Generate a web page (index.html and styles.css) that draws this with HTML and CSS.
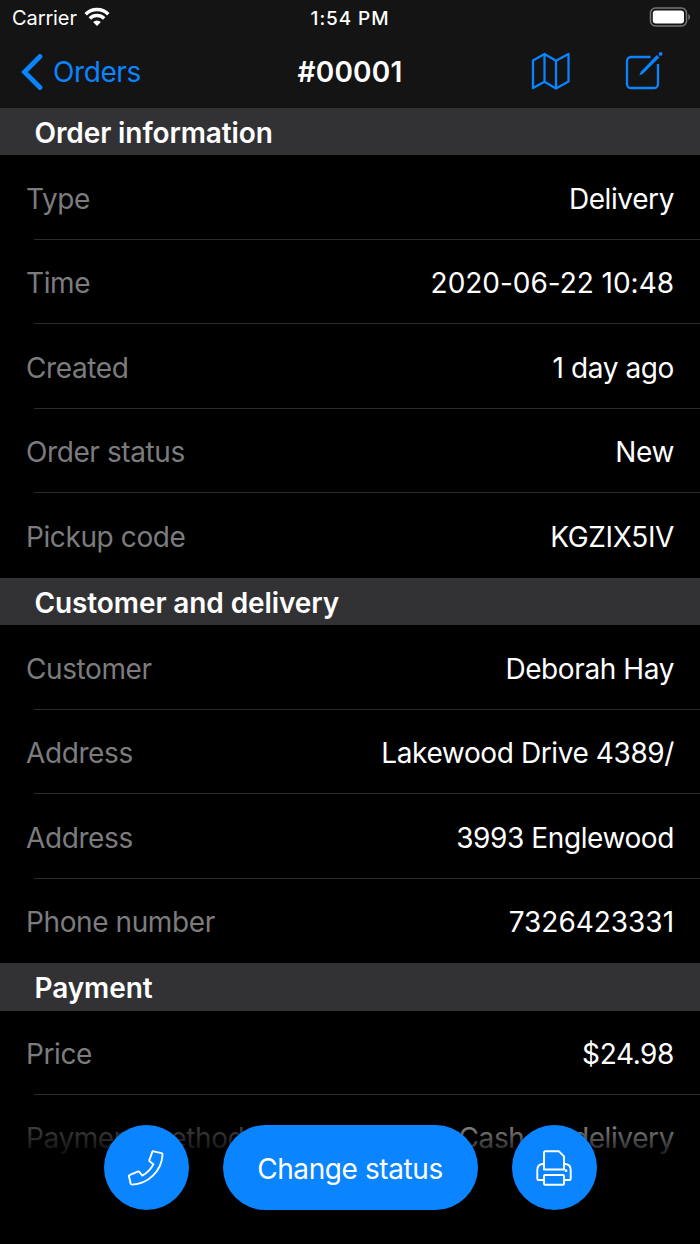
FILE: index.html
```html
<!DOCTYPE html>
<html lang="en">
<head>
    <meta charset="UTF-8">
    <title>Order #00001</title>
    <link rel="stylesheet" href="styles.css">
</head>
<body>
    <div class="screen">
        <header>
            <div class="status-bar">
                <div class="carrier">
                    <span>Carrier</span>
                    <svg class="wifi" width="26" height="19" viewBox="0 0 26 19">
                        <path d="M1.700 7.200a16 16 0 0 1 22.600 0M5.800 11.500a10.200 10.200 0 0 1 14.400 0" fill="none" stroke="#fff" stroke-width="3.500"/>
                        <path d="M13 19l-3.900-3.900a5.500 5.500 0 0 1 7.800 0z" fill="#fff"/>
                    </svg>
                </div>
                <div class="clock">1:54 PM</div>
                <div class="battery">
                    <svg width="42" height="20" viewBox="0 0 42 20">
                        <rect x="1.500" y="1" width="36" height="18" rx="5" fill="none" stroke="#767676" stroke-width="1.500"/>
                        <rect x="3.800" y="3.600" width="31.200" height="12.900" rx="3" fill="#fff"/>
                        <path d="M39.300 7v6c2.200-1 2.200-5 0-6z" fill="#767676"/>
                    </svg>
                </div>
            </div>
            <nav class="nav-bar">
                <a class="back" href="#">
                    <svg width="22" height="36" viewBox="0 0 22 36">
                        <path d="M19 2.500L3.500 18l15.500 15.500" fill="none" stroke="#0a84ff" stroke-width="4.800" stroke-linecap="round" stroke-linejoin="miter"/>
                    </svg>
                    <span>Orders</span>
                </a>
                <h1>#00001</h1>
                <div class="actions">
                    <svg width="40" height="38" viewBox="0 0 40 38">
                        <path d="M2 8.500L13.500 2 25 8.700 37.500 2V29.500L25 36.500 13.500 29.800 2 36zM13.500 2v27.800M25 8.700v27.800" fill="none" stroke="#0a84ff" stroke-width="2.300" stroke-linejoin="round"/>
                    </svg>
                    <svg width="38" height="38" viewBox="0 0 38 38">
                        <path d="M25.500 5H6a4 4 0 0 0-4 4V32a4 4 0 0 0 4 4H29a4 4 0 0 0 4-4V12" fill="none" stroke="#0a84ff" stroke-width="2.300"/>
                        <path d="M31.800 2.900l2.500 2.500L18 21.700l-3.700 1.700 1.700-3.800z" fill="#0a84ff"/>
                        <circle cx="35.600" cy="1.900" r="1.900" fill="#0a84ff"/>
                    </svg>
                </div>
            </nav>
        </header>

        <main>
            <section>
                <h2>Order information</h2>
                <div class="row"><span class="label">Type</span><span class="value">Delivery</span></div>
                <div class="row"><span class="label">Time</span><span class="value number">2020-06-22 10:48</span></div>
                <div class="row"><span class="label">Created</span><span class="value">1 day ago</span></div>
                <div class="row"><span class="label">Order status</span><span class="value">New</span></div>
                <div class="row"><span class="label">Pickup code</span><span class="value">KGZIX5IV</span></div>
            </section>
            <section>
                <h2>Customer and delivery</h2>
                <div class="row"><span class="label">Customer</span><span class="value">Deborah Hay</span></div>
                <div class="row"><span class="label">Address</span><span class="value">Lakewood Drive 4389/</span></div>
                <div class="row"><span class="label">Address</span><span class="value">3993 Englewood</span></div>
                <div class="row"><span class="label">Phone number</span><span class="value number">7326423331</span></div>
            </section>
            <section>
                <h2>Payment</h2>
                <div class="row"><span class="label">Price</span><span class="value">$24.98</span></div>
                <div class="row"><span class="label">Payment method</span><span class="value">Cash on delivery</span></div>
            </section>
        </main>

        <!-- floating buttons over the list -->
        <div class="toolbar">
            <button class="round" aria-label="Call">
                <svg width="36" height="36" viewBox="0 0 36 36">
                    <path d="M25.500 1.300L33.500 3.200Q34.600 3.500 34.500 5C33.500 21 20 34.300 4 34.600Q2.900 34.600 2.600 33.500L1 26.300Q.8 25.200 1.900 24.800L9.800 21.600Q10.800 21.200 11.500 22.100L14.300 25.600C18.800 23.200 23.200 18.900 25.400 14.200L21.900 11.500Q21 10.700 21.500 9.700L24.200 2.100Q24.600 1.100 25.500 1.300z" fill="none" stroke="#fff" stroke-width="1.900" stroke-linejoin="round"/>
                </svg>
            </button>
            <button class="change">Change status</button>
            <button class="round" aria-label="Print">
                <svg width="36" height="36" viewBox="0 0 36 36" fill="none" stroke="#fff" stroke-width="1.900" stroke-linejoin="round">
                    <path d="M8 19.500V2.600Q8 1.300 9.300 1.300H23L28 6.300V19.500z"/>
                    <path d="M8 14H6.500Q1.300 14.500 1.300 20V28.700Q1.300 30 2.600 30H8M28 14h1.500Q34.700 14.500 34.700 20V28.700Q34.700 30 33.400 30H28"/>
                    <rect x="8" y="25" width="20" height="9.700" rx="1"/>
                    <circle cx="30" cy="20.700" r="1.400" fill="#fff" stroke="none"/>
                </svg>
            </button>
        </div>
    </div>
</body>
</html>
```

FILE: styles.css
```css
* {
    box-sizing: border-box;
}
body {
    margin: 0;
    background: #000;
    color: #fff;
    font-family: Inter, sans-serif;
    font-size: 28px;
}
.screen {
    position: relative;
    height: 1244px;
    overflow: hidden;
}
header {
    height: 108px;
    background: #141414;
}
.status-bar {
    display: grid;
    grid-template-columns: minmax(0, 1fr) auto minmax(0, 1fr);
    align-items: center;
    height: 36px;
    padding: 0 9px 0 12px;
    font-size: 20px;
    letter-spacing: -0.1px;
}
.carrier {
    display: flex;
    align-items: center;
    gap: 8px;
}
.wifi {
    margin: 0 0 3px -1px;
}
.clock {
    padding-right: 3px;
    font-size: 19px;
    font-weight: 500;
    letter-spacing: 0.9px;
}
.battery {
    display: flex;
    justify-content: flex-end;
    margin-bottom: 2px;
}
.nav-bar {
    display: grid;
    grid-template-columns: minmax(0, 1fr) auto minmax(0, 1fr);
    align-items: center;
    height: 71px;
    padding: 0 21px;
}
.back {
    display: flex;
    align-items: center;
    gap: 10px;
    color: #0a84ff;
    text-decoration: none;
    letter-spacing: -0.4px;
}
h1 {
    margin: 0;
    font-size: 28px;
    font-weight: 600;
    letter-spacing: 0.2px;
}
.actions {
    display: flex;
    justify-content: flex-end;
    gap: 54px;
    margin: 0 16px 2px 0;
}
.actions svg {
    overflow: visible;
}
h2 {
    display: flex;
    align-items: center;
    height: 47.4px;
    margin: 0;
    padding: 3px 0 0 34.5px;
    background: #323234;
    font-size: 28px;
    font-weight: 600;
    letter-spacing: -0.1px;
}
.row {
    display: flex;
    justify-content: space-between;
    align-items: center;
    height: 84.5px;
    padding: 2px 26px 0;
    background: linear-gradient(#2b2b2d, #2b2b2d) 34px 100% / 100% 1px no-repeat;
    letter-spacing: -0.4px;
}
.row:last-child {
    background: none;
}
.label {
    color: #7c7c7e;
}
.number {
    letter-spacing: -0.03px;
}
.toolbar {
    position: absolute;
    left: 0;
    right: 0;
    bottom: 0;
    display: flex;
    justify-content: center;
    gap: 34px;
    height: 149px;
    padding-top: 30px;
    background: linear-gradient(rgba(0, 0, 0, 0), rgba(0, 0, 0, 0.5) 32px, rgba(0, 0, 0, 0.82) 54px, #000 68px);
}
button {
    display: flex;
    justify-content: center;
    align-items: center;
    height: 85px;
    padding: 0;
    border: none;
    border-radius: 43px;
    background: #0a84ff;
    color: #fff;
    font: inherit;
    letter-spacing: -0.4px;
}
.round {
    width: 85px;
}
.change {
    width: 255px;
    padding-top: 2px;
}
```
